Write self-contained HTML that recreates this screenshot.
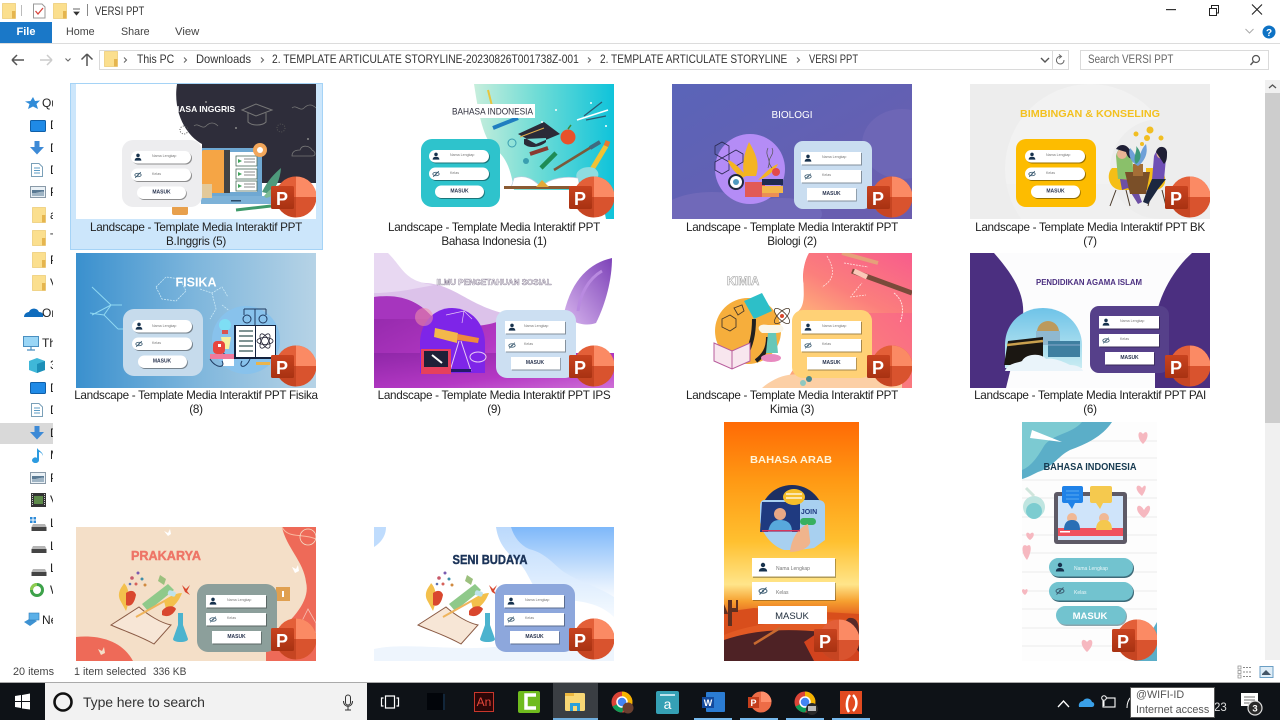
<!DOCTYPE html>
<html><head><meta charset="utf-8"><title>VERSI PPT</title>
<style>
*{box-sizing:border-box}
html,body{margin:0;padding:0;width:1280px;height:720px;overflow:hidden;background:#fff;font-family:"Liberation Sans",sans-serif;color:#2a2a2a}
.a{position:absolute;white-space:pre;transform-origin:0 50%}
.l{position:absolute;width:260px;text-align:center;font-size:11.7px;letter-spacing:-.29px;line-height:14px;color:#222;white-space:pre}
.c{position:absolute;top:53px;font-size:11.6px;color:#333;white-space:pre;transform-origin:0 50%}
.s{position:absolute;font-size:12px;color:#222;white-space:pre;line-height:14px}
svg{position:absolute;overflow:hidden}
svg text{font-family:"Liberation Sans",sans-serif}
.fl{font-size:3.6px;fill:#777}
.fb{font-size:5px;font-weight:bold;fill:#2a3550;text-anchor:middle}
.t{font-weight:bold;text-anchor:middle}
</style></head><body>

<svg width="0" height="0" style="position:absolute">
<defs>
<linearGradient id="pq" x1="0" y1="0" x2="0" y2="1"><stop offset="0" stop-color="#C9431F"/><stop offset="1" stop-color="#A83212"/></linearGradient>
<symbol id="ppt" viewBox="0 0 50 44" width="50" height="44">
<circle cx="28" cy="22" r="20.5" fill="#D9532E"/>
<path d="M28 1.500A20.500 20.500 0 0 1 48.500 22H28Z" fill="#FB8A64"/>
<path d="M28 1.500A20.500 20.500 0 0 0 7.500 22H28Z" fill="#E35F38"/>
<path d="M7.500 22A20.500 20.500 0 0 0 28 42.500V22Z" fill="#C64522"/>
<rect x="3" y="11" width="23" height="23" rx="1.500" fill="url(#pq)"/>
</symbol>
<symbol id="person" viewBox="0 0 10 10" width="10" height="10"><circle cx="5" cy="3" r="2.200" fill="#17324d"/><path d="M0.800 9.500C1 6.500 3 6 5 6S9 6.500 9.200 9.500Z" fill="#17324d"/></symbol>
<symbol id="eye" viewBox="0 0 10 10" width="10" height="10"><ellipse cx="5" cy="5" rx="4" ry="2.200" fill="none" stroke="#3a5a70" stroke-width="1"/><path d="M1.500 8.500L8.500 1.500" stroke="#3a5a70" stroke-width="1"/><circle cx="5" cy="5" r="1" fill="#3a5a70"/></symbol>
<symbol id="pills" viewBox="0 0 80 68" width="80" height="68">
<rect x="10" y="12" width="60" height="12.500" rx="6.200" fill="#000" opacity=".4"/><rect x="9" y="11" width="60" height="12.500" rx="6.200" fill="#fff"/>
<rect x="10" y="29.500" width="60" height="12.500" rx="6.200" fill="#000" opacity=".4"/><rect x="9" y="28.500" width="60" height="12.500" rx="6.200" fill="#fff"/>
<rect x="15.800" y="47.500" width="49" height="12.500" rx="6.200" fill="#000" opacity=".4"/><rect x="15" y="46.500" width="49" height="12.500" rx="6.200" fill="#fff"/>
<use href="#person" x="12" y="13" width="8" height="8"/><use href="#eye" x="12" y="31" width="8" height="8"/>
</symbol>
<symbol id="rects" viewBox="0 0 80 68" width="80" height="68">
<rect x="10" y="12" width="60" height="12.500" fill="#000" opacity=".35"/><rect x="9" y="11" width="60" height="12.500" fill="#fff"/>
<rect x="10" y="30" width="60" height="12.500" fill="#000" opacity=".35"/><rect x="9" y="29" width="60" height="12.500" fill="#fff"/>
<rect x="15.800" y="48" width="49" height="12.500" fill="#000" opacity=".35"/><rect x="15" y="47" width="49" height="12.500" fill="#fff"/>
<use href="#person" x="12" y="13" width="8" height="8"/><use href="#eye" x="12" y="31.500" width="8" height="8"/>
</symbol>
<symbol id="craft" viewBox="0 0 100 90" width="100" height="90">
<circle cx="32" cy="18" r="1.500" fill="#7a5bb0"/><circle cx="26" cy="23" r="1.800" fill="#c85a6a"/><circle cx="36" cy="24" r="1.500" fill="#3e8ea8"/><circle cx="30" cy="29" r="1.500" fill="#d6625a"/><circle cx="39" cy="30" r="1.500" fill="#d08a40"/><circle cx="24" cy="29" r="1.300" fill="#5a70b0"/>
<path d="M14 45C10 36 18 30 18 28C24 34 24 46 20 56Z" fill="#F3C04C"/>
<path d="M20 38C25 34 29 36 30 40C28 50 24 52 20 50Z" fill="#D9472E"/>
<path d="M36 49L62 29L68 35L42 56Z" fill="#8FC98A"/>
<path d="M5 70L33 52C42 60 55 68 65 70L48 89C32 80 18 76 5 70Z" fill="#F7E6D6" stroke="#8a5a44" stroke-width="1"/>
<path d="M30 62L62 44" stroke="#EFB45C" stroke-width="2"/>
<path d="M58 46C64 40 72 38 76 38C72 48 66 54 60 54Z" fill="#F3C04C"/><path d="M56 56C60 50 68 50 70 54C66 62 60 62 56 60Z" fill="#D9472E"/>
<path d="M72 58H77V70L82 84C82 88 67 88 67 84L72 70Z" fill="#4BB3CE"/>
<rect x="62" y="36" width="8" height="5" rx="2" fill="#BFE3EA" transform="rotate(20 66 38)"/>
<path d="M76 30L80 34L84 30L81 36L84 40L79 37Z" fill="#D9472E"/><path d="M54 20L60 24L58 30L52 26Z" fill="#9CC07E"/>
</symbol>
<symbol id="fold" viewBox="0 0 14 16" width="14" height="16"><rect x="0.500" y="0.500" width="13" height="15" fill="#FBDF8E" stroke="#EBC870" stroke-width=".7"/><rect x="10" y="8" width="3.500" height="7.500" fill="#E5B54E"/></symbol>
<symbol id="desk" viewBox="0 0 16 12" width="16" height="12"><rect x=".5" y=".5" width="15" height="11" rx="1" fill="#1F8AE6" stroke="#0F5FA8"/></symbol>
<symbol id="dl" viewBox="0 0 16 16" width="16" height="16"><path d="M5.500 1H10.500V7H15L8 14.500L1 7H5.500Z" fill="#3D8AD6"/></symbol>
<symbol id="doc" viewBox="0 0 12 14" width="12" height="14"><path d="M.5 .5H8L11.500 4V13.500H.5Z" fill="#fff" stroke="#7aa0b8"/><path d="M3 5H9M3 7.500H9M3 10H9" stroke="#5d9cc5"/></symbol>
<symbol id="pic" viewBox="0 0 16 12" width="16" height="12"><rect x=".5" y=".5" width="15" height="11" fill="#EAF1F6" stroke="#8a9aa8"/><path d="M2 4H14V6C10 5 6 8 2 7Z" fill="#5a7a94"/><path d="M2 7C6 8 10 5 14 6V10H2Z" fill="#9fb4c4"/></symbol>
<symbol id="drive" viewBox="0 0 16 8" width="16" height="8"><path d="M2 1H14L15.500 4H.5Z" fill="#b5b5b5"/><rect x=".5" y="4" width="15" height="4" fill="#444"/></symbol>
</defs>
</svg>

<!-- title bar -->
<svg style="left:0;top:0" width="1280" height="80" viewBox="0 0 1280 80">
<use href="#fold" x="2" y="3"/>
<rect x="21" y="5" width="1" height="11" fill="#bbb"/>
<path d="M33.500 4H42L45 7V18H33.500Z" fill="#fff" stroke="#999"/><path d="M35.500 11L38 14L43 8" stroke="#D8443C" stroke-width="1.300" fill="none"/>
<use href="#fold" x="53" y="3"/>
<path d="M73 9H80M74 12H79L76.500 15Z" fill="#333" stroke="#333" stroke-width=".8"/>
<rect x="87" y="4" width="1" height="12" fill="#888"/>
<rect x="1166" y="9" width="10" height="1.200" fill="#333"/>
<path d="M1209.500 8.500H1216.500V15.500H1209.500ZM1211.500 8V5.500H1218.500V13H1217" fill="none" stroke="#222" stroke-width="1"/>
<path d="M1252 4.500L1262 14.500M1262 4.500L1252 14.500" stroke="#222" stroke-width="1.100"/>
<rect x="0" y="43" width="1280" height="1" fill="#dcdcdc"/>
<path d="M1245.500 29L1249.500 33L1253.500 29" fill="none" stroke="#aaa" stroke-width="1"/>
<circle cx="1269" cy="32" r="6.500" fill="#0E72C4"/><text x="1269" y="36" font-size="10" font-weight="bold" text-anchor="middle" fill="#fff">?</text>
<path d="M12 60H24M12 60L17 55M12 60L17 65" fill="none" stroke="#555" stroke-width="1.500"/>
<path d="M52 60H40M52 60L47 55M52 60L47 65" fill="none" stroke="#ccc" stroke-width="1.500"/>
<path d="M65.500 58.500L68 61L70.500 58.500" fill="none" stroke="#666" stroke-width="1.100"/>
<path d="M87 66V54M87 54L81.500 59.500M87 54L92.500 59.500" fill="none" stroke="#555" stroke-width="1.500"/>
<rect x="99.500" y="50.500" width="953" height="19" fill="#fff" stroke="#dadada"/>
<rect x="1052.500" y="50.500" width="16" height="19" fill="#fff" stroke="#dadada"/>
<use href="#fold" x="104" y="51"/>
<path d="M124 57.500L126.500 60L124 62.500M184 57.500L186.500 60L184 62.500M261 57.500L263.500 60L261 62.500M588 57.500L590.500 60L588 62.500M797 57.500L799.500 60L797 62.500" fill="none" stroke="#666" stroke-width="1.100"/>
<path d="M1041 58L1045 62L1049 58" fill="none" stroke="#555" stroke-width="1.400"/>
<path d="M1064 60A3.800 3.800 0 1 1 1061 56.500M1059 54.500L1061.500 56.500L1059 58.500" fill="none" stroke="#666" stroke-width="1"/>
<rect x="1080.500" y="50.500" width="188" height="19" fill="#fff" stroke="#dadada"/>
<circle cx="1256" cy="59" r="3.500" fill="none" stroke="#555" stroke-width="1.200"/><path d="M1253.500 61.500L1250.500 65" stroke="#555" stroke-width="1.400"/>
</svg>
<div class="a" style="left:95px;top:4px;font-size:11.8px;color:#333;transform:scaleX(.8)">VERSI PPT</div>
<div class="a" style="left:0;top:22px;width:52px;height:21px;background:#1A78C8;color:#fff;font-size:11px;font-weight:bold;text-align:center;line-height:21px">File</div>
<div class="a" style="left:66px;top:26px;font-size:11.3px;color:#444;transform:scaleX(.95)">Home</div>
<div class="a" style="left:121px;top:26px;font-size:11.3px;color:#444;transform:scaleX(.95)">Share</div>
<div class="a" style="left:175px;top:26px;font-size:11.3px;color:#444">View</div>
<div class="c" style="left:137px;transform:scaleX(.9)">This PC</div>
<div class="c" style="left:196px;transform:scaleX(.96)">Downloads</div>
<div class="c" style="left:272px;transform:scaleX(.885)">2. TEMPLATE ARTICULATE STORYLINE-20230826T001738Z-001</div>
<div class="c" style="left:600px;transform:scaleX(.87)">2. TEMPLATE ARTICULATE STORYLINE</div>
<div class="c" style="left:809px;transform:scaleX(.81)">VERSI PPT</div>
<div class="a" style="left:1088px;top:53px;font-size:11.6px;color:#666;transform:scaleX(.85)">Search VERSI PPT</div>

<!-- sidebar -->
<div style="position:absolute;left:0;top:80px;width:53px;height:580px;overflow:hidden">
<div style="position:absolute;left:0;top:343px;width:53px;height:21px;background:#d9d9d9"></div>
<svg style="left:0;top:0" width="53" height="580" viewBox="0 80 53 580">
<path d="M33 97L35 101L40 100.500L36.500 104L38 109L33 106.500L28 109L29.500 104L25 101.500L30.500 101Z" fill="#2F8BD8"/>
<use href="#desk" x="30" y="120"/><use href="#dl" x="29" y="140"/><use href="#doc" x="31" y="163"/><use href="#pic" x="30" y="186"/>
<use href="#fold" x="32" y="207"/><use href="#fold" x="32" y="230"/><use href="#fold" x="32" y="252"/><use href="#fold" x="32" y="275"/>
<path d="M24 317C24 313 28 312 29 312C30 308 37 307 39 312C42 312 44 314 43 317Z" fill="#0F6CBD"/>
<rect x="23.500" y="336.500" width="15" height="10" fill="#9AD6F6" stroke="#4A8FC0"/><path d="M27 350H35M31 347V350" stroke="#4A8FC0" stroke-width="1.200"/>
<path d="M37 358L45 361V370L37 373L29 370V361Z" fill="#3FB7D8"/><path d="M37 364L45 361V370L37 373Z" fill="#1D8FB8"/>
<use href="#desk" x="30" y="382"/><use href="#doc" x="31" y="403"/><use href="#dl" x="29" y="425"/>
<path d="M39 448V460C39 464 32 464 32 460C33 457 36 457 37 458V448C39 451 43 452 43 456C42 453 40 452 39 452Z" fill="#2C9BE0"/>
<use href="#pic" x="30" y="472"/>
<rect x="31" y="493" width="15" height="14" fill="#333"/><rect x="34" y="496" width="9" height="8" fill="#5d8a4a"/><path d="M32.500 494V506M44.500 494V506" stroke="#ccc" stroke-dasharray="1 1"/>
<rect x="30" y="517" width="2.500" height="2.500" fill="#2E8BD8"/><rect x="33.500" y="517" width="2.500" height="2.500" fill="#2E8BD8"/><rect x="30" y="520.500" width="2.500" height="2.500" fill="#2E8BD8"/><rect x="33.500" y="520.500" width="2.500" height="2.500" fill="#2E8BD8"/>
<use href="#drive" x="31" y="523"/><use href="#drive" x="31" y="545"/><use href="#drive" x="31" y="568"/>
<circle cx="37" cy="590" r="7" fill="#3DA24A"/><circle cx="37" cy="590" r="4" fill="#fff"/><path d="M30 590A7 7 0 0 1 37 583V586A4 4 0 0 0 33 590Z" fill="#8ecb50"/>
<path d="M24 622L31 618L37 621L30 626Z" fill="#3E92D2"/><rect x="29" y="613" width="10" height="7" fill="#5BB0E8" stroke="#2E7CB8" stroke-width=".6"/>
</svg>
<div class="s" style="left:42px;top:16px">Quick access</div>
<div class="s" style="left:50px;top:38px">Desktop</div><div class="s" style="left:50px;top:61px">Downloads</div><div class="s" style="left:50px;top:83px">Documents</div><div class="s" style="left:50px;top:105px">Pictures</div>
<div class="s" style="left:50px;top:128px">a</div><div class="s" style="left:50px;top:151px">T</div><div class="s" style="left:50px;top:173px">P</div><div class="s" style="left:50px;top:196px">V</div>
<div class="s" style="left:42px;top:226px">OneDrive</div><div class="s" style="left:42px;top:256px">This PC</div>
<div class="s" style="left:50px;top:278px">3D Objects</div><div class="s" style="left:50px;top:301px">Desktop</div><div class="s" style="left:50px;top:323px">Documents</div><div class="s" style="left:50px;top:346px">Downloads</div><div class="s" style="left:50px;top:368px">Music</div><div class="s" style="left:50px;top:391px">Pictures</div><div class="s" style="left:50px;top:413px">Videos</div><div class="s" style="left:50px;top:436px">Local Disk</div><div class="s" style="left:50px;top:459px">Local Disk</div><div class="s" style="left:50px;top:481px">Local Disk</div><div class="s" style="left:50px;top:503px">WD</div><div class="s" style="left:42px;top:533px">Network</div>
</div>

<!-- selection -->
<div style="position:absolute;left:70px;top:83px;width:253px;height:167px;background:#CCE6FB;border:1px solid #A5D3F6"></div>

<!-- scrollbar -->
<div style="position:absolute;left:1265px;top:80px;width:15px;height:580px;background:#F0F0F0"></div>
<div style="position:absolute;left:1265px;top:93px;width:15px;height:330px;background:#CDCDCD"></div>
<svg style="left:1265px;top:80px" width="15" height="13"><path d="M4 8L7.500 5L11 8" fill="none" stroke="#555" stroke-width="1.300"/></svg>

<!-- thumbnails -->
<div style="position:absolute;left:0;top:0;width:1280px;height:720px;filter:blur(.35px)">

<!-- T1 B.Inggris -->
<svg style="left:76px;top:84px" width="240" height="135" viewBox="0 0 240 135">
<rect width="240" height="135" fill="#fff"/>
<path d="M101 0H240V99H126V60C108 50 97 26 101 0Z" fill="#2E2D3A"/>
<path d="M118 42C122 38 126 46 130 42S138 38 142 42M216 24C220 20 224 28 228 24S236 20 240 24" fill="none" stroke="#777" stroke-width=".8"/>
<path d="M166 26L180 20L196 26L180 32ZM172 29V38C176 42 186 42 190 38V29" fill="none" stroke="#777" stroke-width="1"/>
<path d="M216 72C216 66 222 66 224 66C226 60 234 62 236 66C240 68 240 72 236 72Z" fill="none" stroke="#777" stroke-width=".8"/>
<circle cx="130" cy="18" r="1" fill="#888"/><circle cx="160" cy="44" r="1" fill="#888"/><circle cx="205" cy="44" r="4" fill="none" stroke="#555" stroke-dasharray="1 1.500"/><circle cx="108" cy="46" r="4" fill="none" stroke="#555" stroke-dasharray="1 1.500"/><circle cx="232" cy="55" r="1" fill="#888"/>
<rect x="126" y="64" width="60" height="48" fill="#6FA8D2"/><rect x="131" y="68" width="50" height="40" fill="#fff"/>
<rect x="125" y="112" width="70" height="8" fill="#7DB2D8"/><rect x="155" y="116" width="10" height="1.500" fill="#2c4a66"/>
<rect x="126" y="66" width="28" height="43" rx="2" fill="#F5A545"/><rect x="148" y="66" width="6" height="43" fill="#444"/>
<rect x="118" y="100" width="18" height="14" fill="#E3C99A"/>
<rect x="160" y="72" width="21" height="10" fill="#fff" stroke="#4a6a5a" stroke-width=".8"/><rect x="160" y="85" width="21" height="10" fill="#fff" stroke="#4a6a5a" stroke-width=".8"/><rect x="160" y="97" width="21" height="10" fill="#fff" stroke="#4a6a5a" stroke-width=".8"/>
<path d="M162 75L166 77L162 79ZM162 88L166 90L162 92ZM162 100L166 102L162 104Z" fill="#41A35B"/><path d="M168 75H179M168 78H179M168 88H179M168 91H179M168 100H179M168 103H179" stroke="#666" stroke-width=".8"/>
<circle cx="184" cy="66" r="7" fill="#F2A65A"/><circle cx="184" cy="66" r="3" fill="#fff"/>
<path d="M186 108C192 96 198 90 205 84C204 96 200 104 194 110Z" fill="#4E9A7C"/><path d="M188 112C194 104 202 100 210 100C204 108 198 112 190 114Z" fill="#7DBB96"/>
<path d="M160 126L195 122" stroke="#3F9A6A" stroke-width="3"/>
<rect x="96" y="122" width="16" height="9" rx="2" fill="#E8A04C"/>
<rect x="46" y="56" width="80" height="67" rx="11" fill="#EDEDEF"/><use href="#pills" x="46" y="56"/>
<text class="fl" x="76" y="73">Nama Lengkap</text><text class="fl" x="76" y="91">Kelas</text><text class="fb" x="85.500" y="109.500">MASUK</text>
<text class="t" x="122" y="28" font-size="8.500" fill="#fff">BAHASA INGGRIS</text>
<use href="#ppt" x="192" y="91"/><text class="t" x="206" y="121" font-size="18" fill="#fff">P</text>
</svg>

<!-- T2 B.Indonesia -->
<svg style="left:374px;top:84px" width="240" height="135" viewBox="0 0 240 135">
<defs><linearGradient id="g2" x1="0" y1="0" x2="1" y2="0"><stop offset="0" stop-color="#C7EEDC"/><stop offset=".45" stop-color="#6FDCD6"/><stop offset="1" stop-color="#0FC3DA"/></linearGradient></defs>
<rect width="240" height="135" fill="#fff"/>
<path d="M100 0H240V135H232L226 106H140C138 92 134 74 122 66C108 55 104 25 100 0Z" fill="url(#g2)"/>
<path d="M114 6L120 30" stroke="#E8C53E" stroke-width="2"/>
<path d="M119 44L144 34" stroke="#1F7EC0" stroke-width="4"/>
<path d="M144 50L170 38L186 50L162 60ZM150 55V60C156 66 168 62 172 58L172 54" fill="#2B2B38"/><path d="M146 53L170 44" stroke="#E3B04C" stroke-width="1"/>
<circle cx="194" cy="53" r="7.500" fill="#E8522B"/><path d="M194 45L197 41" stroke="#3F8A3A" stroke-width="1.500"/>
<path d="M203 36L234 26" stroke="#fff" stroke-width="1.500"/><path d="M210 32L228 18M212 36L232 32" stroke="#2A5A70" stroke-width="1.300"/>
<path d="M156 70L174 64" stroke="#8A3A30" stroke-width="4"/>
<path d="M167 84L182 69" stroke="#1E8C56" stroke-width="4.500"/>
<path d="M180 86L219 62" stroke="#7A5A3A" stroke-width="2.500"/><path d="M216 64L226 58" stroke="#3F6A80" stroke-width="4"/>
<path d="M214 92L232 62" stroke="#F2C233" stroke-width="5"/><path d="M232 62L234 57" stroke="#E87A30" stroke-width="5"/>
<path d="M206 98C196 90 208 80 220 84C230 90 222 102 206 98Z" fill="#8EDCE0"/>
<circle cx="168" cy="38" r="1" fill="#fff"/><circle cx="217" cy="19" r="1" fill="#fff"/><circle cx="232" cy="42" r="1" fill="#fff"/><circle cx="182" cy="26" r="1" fill="#fff"/><circle cx="138" cy="59" r="4" fill="none" stroke="#3A9EB0"/><circle cx="152" cy="77" r="3" fill="#3A9EB0"/>
<path d="M140 94C152 90 160 96 166 102L137 104ZM168 102C176 94 192 92 204 94L206 104Z" fill="#fff" stroke="#bcd" stroke-width=".7"/>
<rect x="130" y="102" width="66" height="3" fill="#8A5A32"/><path d="M162 103L168 96L175 103Z" fill="#E4A938"/>
<rect x="47" y="55" width="79" height="68" rx="11" fill="#2EC3CC"/><use href="#pills" x="46" y="55"/>
<text class="fl" x="76" y="72">Nama Lengkap</text><text class="fl" x="76" y="90">Kelas</text><text class="fb" x="85.500" y="108.500">MASUK</text>
<rect x="76" y="20" width="85" height="14" fill="#fff"/><text x="118.500" y="30.500" font-size="8.800" text-anchor="middle" fill="#2c2c3a" textLength="81" lengthAdjust="spacingAndGlyphs">BAHASA INDONESIA</text>
<use href="#ppt" x="192" y="91"/><text class="t" x="206" y="121" font-size="18" fill="#fff">P</text>
</svg>

<!-- T3 Biologi -->
<svg style="left:672px;top:84px" width="240" height="135" viewBox="0 0 240 135">
<defs><linearGradient id="g3" x1="0" y1="0" x2="1" y2="1"><stop offset="0" stop-color="#5A64B8"/><stop offset="1" stop-color="#6B5DAE"/></linearGradient></defs>
<rect width="240" height="135" fill="url(#g3)"/>
<ellipse cx="40" cy="128" rx="50" ry="20" fill="#7069B9"/><ellipse cx="110" cy="130" rx="40" ry="16" fill="#7069B9"/><ellipse cx="230" cy="60" rx="40" ry="35" fill="#6D66B6"/>
<circle cx="78" cy="85" r="35" fill="#B48CF6"/>
<path d="M43 62L50 58L57 62V70L50 74L43 70ZM57 70L64 66L71 70V78L64 82L57 78ZM43 78L50 74L57 78V86L50 90L43 86Z" fill="none" stroke="#2A2A50" stroke-width=".8"/>
<path d="M72 92C70 80 72 70 77 58C84 70 88 80 84 92ZM70 94C62 88 56 80 56 76C62 78 68 84 74 92ZM88 94C94 88 100 82 106 80C102 88 94 94 86 96Z" fill="#F4B423"/>
<rect x="73" y="98" width="20" height="15" fill="#E25A55"/><rect x="90" y="95" width="21" height="6" fill="#1F2A50"/><rect x="90" y="102" width="21" height="7" fill="#F2B64C"/><rect x="90" y="109" width="17" height="4" fill="#EB8E55"/>
<circle cx="64" cy="98" r="7" fill="#fff" stroke="#20283E" stroke-width="2"/><circle cx="64" cy="98" r="3" fill="#4E9AC0"/>
<circle cx="104" cy="88" r="4" fill="#E2484A"/><path d="M96 64C92 72 100 74 96 84M100 64C104 72 92 74 100 84" fill="none" stroke="#555" stroke-width=".7"/>
<rect x="122" y="57" width="78" height="68" rx="9" fill="#C9DDF0"/><use href="#rects" x="120" y="57"/>
<text class="fl" x="150" y="74">Nama Lengkap</text><text class="fl" x="150" y="92">Kelas</text><text class="fb" x="159.500" y="111">MASUK</text>
<text x="120" y="34" font-size="10" text-anchor="middle" fill="#fff">BIOLOGI</text>
<use href="#ppt" x="192" y="91"/><text class="t" x="206" y="121" font-size="18" fill="#fff">P</text>
</svg>

<!-- T4 BK -->
<svg style="left:970px;top:84px" width="240" height="135" viewBox="0 0 240 135">
<rect width="240" height="135" fill="#EDEDED"/><circle cx="120" cy="85" r="85" fill="#F2F2F2"/><circle cx="190" cy="85" r="50" fill="#EDEDED"/><rect x="0" y="100" width="240" height="35" fill="#EDEDED" opacity=".5"/>
<path d="M142 84C136 90 138 104 150 106H160V84Z" fill="#F5BE16"/><path d="M188 84C198 90 198 104 186 106H176V84Z" fill="#F5BE16"/>
<path d="M146 106L140 122M156 106L160 122M182 106L178 122M192 106L196 122" stroke="#4A3A2A" stroke-width="1"/>
<path d="M146 72C148 60 160 60 162 72L164 95H148Z" fill="#8AC06A"/><circle cx="152" cy="70" r="5" fill="#E9B595"/><path d="M146 65C150 58 160 60 162 72C164 76 158 76 156 68Z" fill="#1F1F35"/>
<path d="M150 95L164 96L172 118L168 120L158 104L152 106Z" fill="#6D4FA5"/>
<path d="M184 72C188 62 196 64 196 74L194 96H182Z" fill="#6F4FB5"/><circle cx="191" cy="70" r="4.500" fill="#E9B595"/><path d="M186 68C188 60 198 62 197 70C197 76 196 78 194 80Z" fill="#1F1F35"/>
<path d="M182 95H196L188 105L178 120L173 118L178 104Z" fill="#1C2740"/>
<path d="M155 88H180L176 110H160Z" fill="#7A4F28"/><rect x="163" y="80" width="10" height="12" fill="#A56E36"/>
<path d="M168 82C160 78 158 70 160 64C164 68 166 72 168 78C170 70 172 64 176 60C178 68 176 76 168 82Z" fill="#6FA0D8"/><path d="M166 80C162 74 168 66 166 62C172 68 172 76 166 80Z" fill="#3E9A7A"/>
<circle cx="166" cy="50" r="2.500" fill="#F1BE22"/><circle cx="177" cy="54" r="3" fill="#F1BE22"/><circle cx="180" cy="46" r="3.500" fill="#F1BE22"/><circle cx="191" cy="54" r="2.500" fill="#F1BE22"/><circle cx="172" cy="60" r="2" fill="#F1BE22"/>
<rect x="46" y="55" width="80" height="68" rx="10" fill="#FDBC00"/><use href="#pills" x="46" y="55"/>
<text class="fl" x="76" y="72">Nama Lengkap</text><text class="fl" x="76" y="90">Kelas</text><text class="fb" x="85.500" y="108.500">MASUK</text>
<text class="t" x="120" y="33" font-size="10.500" fill="#F3C11F" textLength="140" lengthAdjust="spacingAndGlyphs">BIMBINGAN &amp; KONSELING</text>
<use href="#ppt" x="192" y="91"/><text class="t" x="206" y="121" font-size="18" fill="#fff">P</text>
</svg>

<!-- T5 Fisika -->
<svg style="left:76px;top:253px" width="240" height="135" viewBox="0 0 240 135">
<defs><linearGradient id="g5" x1="0" y1="0" x2="1" y2="0"><stop offset="0" stop-color="#3A90CE"/><stop offset=".5" stop-color="#7EB6DC"/><stop offset="1" stop-color="#B6D3E6"/></linearGradient></defs>
<rect width="240" height="135" fill="url(#g5)"/>
<path d="M16 34L35 52L46 52M35 52L28 62L42 76M35 52L16 62M28 62L14 60M42 76L52 76" fill="none" stroke="#8FD8F2" stroke-width="1"/>
<path d="M80 34L90 24L104 26L110 38L100 48L86 46ZM124 36L136 40L146 34L152 44M136 40L140 56L134 66M146 52L156 60L148 70" fill="none" stroke="#C9E8F6" stroke-width=".8" stroke-dasharray="2 1"/>
<circle cx="170" cy="87" r="34" fill="#88C2EC"/>
<path d="M150 92C144 96 146 100 150 102" fill="none" stroke="#2C4A80"/>
<path d="M145 84L155 84L153 96L147 96Z" fill="#F6F0A0"/><circle cx="149" cy="72" r="6" fill="#7EDEF4"/><rect x="146" y="77" width="6" height="4" fill="#D9534F"/>
<path d="M174 56H184M168 56H190M168 56V62M190 56V62M179 56V76" stroke="#1F3A60" fill="none"/><circle cx="171" cy="66" r="4" fill="none" stroke="#1F3A60"/><circle cx="187" cy="66" r="4" fill="none" stroke="#1F3A60"/>
<rect x="134" y="101" width="44" height="5" fill="#F07A9C"/>
<rect x="137" y="88" width="12" height="13" rx="4" fill="#E8463E"/><rect x="162" y="88" width="12" height="13" rx="4" fill="#E8463E"/><rect x="142" y="91" width="3" height="3" fill="#fff"/><rect x="167" y="91" width="3" height="3" fill="#fff"/>
<rect x="147" y="106" width="11" height="7" fill="#fff"/><path d="M134 106C140 116 150 115 146 108M174 106C170 116 162 115 166 108" fill="none" stroke="#1F3A60"/>
<rect x="158" y="72" width="42" height="34" fill="#13223E"/><rect x="160" y="73" width="19" height="31" fill="#fff"/><rect x="180" y="73" width="19" height="31" fill="#fff"/>
<path d="M163 78H177M163 83H177M163 88H177M163 93H177M163 98H177" stroke="#355" stroke-width="1.200"/>
<ellipse cx="189" cy="88" rx="8" ry="3.500" fill="none" stroke="#223" stroke-width=".8" transform="rotate(60 189 88)"/><ellipse cx="189" cy="88" rx="8" ry="3.500" fill="none" stroke="#223" stroke-width=".8" transform="rotate(-60 189 88)"/><ellipse cx="189" cy="88" rx="8" ry="3.500" fill="none" stroke="#223" stroke-width=".8"/>
<rect x="180" y="109" width="14" height="3" fill="#E9B44C"/>
<rect x="47" y="56" width="80" height="67" rx="11" fill="#C6DBEC"/><use href="#pills" x="47" y="56"/>
<text class="fl" x="76" y="74">Nama Lengkap</text><text class="fl" x="76" y="91">Kelas</text><text class="fb" x="86" y="109.500">MASUK</text>
<text class="t" x="120" y="33.500" font-size="12.500" fill="#fff">FISIKA</text>
<use href="#ppt" x="192" y="91"/><text class="t" x="206" y="121" font-size="18" fill="#fff">P</text>
</svg>

<!-- T6 IPS -->
<svg style="left:374px;top:253px" width="240" height="135" viewBox="0 0 240 135">
<defs><linearGradient id="g6" x1="0" y1="0" x2="1" y2="1"><stop offset="0" stop-color="#8F27A8"/><stop offset=".6" stop-color="#B438C4"/><stop offset="1" stop-color="#CE6FD6"/></linearGradient><linearGradient id="r6" x1="1" y1="0" x2="0" y2="1"><stop offset="0" stop-color="#7D42B8"/><stop offset="1" stop-color="#D8B6EE"/></linearGradient></defs>
<rect width="240" height="135" fill="#fff"/>
<path d="M0 3C14 20 24 28 52 30C80 32 92 50 128 60C145 64 155 68 180 62L160 135H0Z" fill="#DCC2EA"/>
<path d="M0 0H14C30 16 30 28 60 32C40 36 20 40 0 40Z" fill="#E8D8F2"/>
<path d="M0 44C30 42 45 48 60 66C80 76 120 76 135 62L175 135H0Z" fill="url(#g6)"/>
<path d="M0 44C30 40 46 50 60 66L0 66Z" fill="#A635BE"/>
<rect x="0" y="100" width="240" height="35" fill="url(#g6)"/>
<path d="M238 5C216 10 198 26 190 60C196 70 212 74 222 70C232 50 238 26 238 5Z" fill="url(#r6)"/>
<path d="M228 18C214 26 206 42 204 58" stroke="#B98AE0" stroke-width="3" fill="none"/>
<path d="M46 120V90C46 70 60 55 78 55C98 55 111 72 111 90V120Z" fill="#7E25E8"/>
<circle cx="50" cy="64" r="9" fill="#F08FA8" opacity=".55"/>
<path d="M61 75L84 80L83 90L60 84Z" fill="#F3B84A"/><path d="M84 81L105 85L104 90L83 87Z" fill="#F08A3C"/><path d="M85 88L76 118M87 88L97 118" stroke="#E8C9F4" stroke-width="1"/>
<path d="M72 62L90 58L98 66M90 58L88 70" stroke="#E8C9F4" stroke-width=".7" fill="none"/>
<rect x="47" y="96" width="30" height="25" fill="#E6405C"/><rect x="50" y="98" width="24" height="16" fill="#1E2038"/><path d="M58 102L68 110" stroke="#fff" stroke-width="2"/>
<ellipse cx="104" cy="104" rx="8" ry="5" fill="none" stroke="#E8C9F4"/>
<rect x="77" y="116" width="20" height="3" fill="#221a6a"/>
<rect x="122" y="57" width="80" height="68" rx="11" fill="#CCDFF2"/><use href="#rects" x="122" y="57"/>
<text class="fl" x="150" y="74">Nama Lengkap</text><text class="fl" x="150" y="92">Kelas</text><text class="fb" x="161" y="111">MASUK</text>
<text class="t" x="120" y="32" font-size="8.200" fill="#fff" stroke="#5a4a6a" stroke-width=".35" textLength="115" lengthAdjust="spacingAndGlyphs">ILMU PENGETAHUAN SOSIAL</text>
<use href="#ppt" x="192" y="91"/><text class="t" x="206" y="121" font-size="18" fill="#fff">P</text>
</svg>

<!-- T7 Kimia -->
<svg style="left:672px;top:253px" width="240" height="135" viewBox="0 0 240 135">
<defs><linearGradient id="g7" x1="1" y1="0" x2="0" y2="1"><stop offset="0" stop-color="#F85C8C"/><stop offset=".6" stop-color="#FB7F7C"/><stop offset="1" stop-color="#FFB27A"/></linearGradient></defs>
<rect width="240" height="135" fill="#fff"/>
<path d="M137 0C127 20 130 40 142 50H240V135H110C116 125 120 118 124 112L124 62C138 56 128 22 137 0Z" fill="url(#g7)"/>
<path d="M137 0H240V60H124C140 50 124 22 137 0Z" fill="url(#g7)"/>
<path d="M90 135C105 122 120 120 130 122H230V135Z" fill="#FCCFA5"/>
<path d="M180 18L240 40" stroke="#7A4A3A" stroke-width="5"/><path d="M182 18L195 24" stroke="#FBC9B9" stroke-width="5"/><path d="M170 0L206 10" stroke="#E6A07A" stroke-width="4"/>
<path d="M155 3C165 20 160 28 150 34M172 10L196 14M178 44L194 42M180 42L190 30" stroke="#FFE1DE" stroke-width=".8" fill="none" stroke-dasharray="2 1"/>
<path d="M222 40C232 48 232 58 228 70" stroke="#FFE1DE" fill="none" stroke-dasharray="2 1"/>
<circle cx="76" cy="78" r="33" fill="#F6AE3C"/>
<path d="M72 48L90 40L100 58L82 66Z" fill="#2DBFC8"/>
<path d="M82 66C82 80 80 92 72 106" stroke="#202020" stroke-width="4" fill="none"/><path d="M96 84C96 96 92 102 84 108" stroke="#202020" stroke-width="4" fill="none"/>
<path d="M96 72C86 70 84 76 90 80H104C112 80 114 74 108 72Z" fill="#FAF6E8"/>
<path d="M96 80H104L106 100H94Z" fill="#67C7B8"/><ellipse cx="99" cy="105" rx="10" ry="4" fill="#E88AC0"/>
<path d="M42 90L60 98L78 90V108L60 116L42 108Z" fill="#F8E6EE" stroke="#B85C9C"/><path d="M60 98V116" stroke="#B85C9C"/>
<path d="M50 66L58 62L64 66V74L58 78L50 74ZM62 55L70 52L72 58L66 62Z" fill="none" stroke="#4A3A2A" stroke-width=".9"/>
<ellipse cx="110" cy="63" rx="10" ry="4" fill="none" stroke="#4A3A2A" stroke-width=".8" transform="rotate(45 110 63)"/><ellipse cx="110" cy="63" rx="10" ry="4" fill="none" stroke="#4A3A2A" stroke-width=".8" transform="rotate(-45 110 63)"/><circle cx="110" cy="63" r="2" fill="#D9472E"/>
<rect x="120" y="57" width="80" height="68" rx="11" fill="#FFD176"/><use href="#rects" x="120" y="57"/>
<text class="fl" x="150" y="74">Nama Lengkap</text><text class="fl" x="150" y="92">Kelas</text><text class="fb" x="159.500" y="111">MASUK</text>
<circle cx="131" cy="130" r="3" fill="#8FC8C0"/><circle cx="137" cy="126" r="3" fill="#4A8A90"/>
<text x="71" y="32" font-size="11.500" text-anchor="middle" fill="#fff" stroke="#999" stroke-width=".5" font-weight="bold">KIMIA</text>
<use href="#ppt" x="192" y="91"/><text class="t" x="206" y="121" font-size="18" fill="#fff">P</text>
</svg>

<!-- T8 PAI -->
<svg style="left:970px;top:253px" width="240" height="135" viewBox="0 0 240 135">
<defs><linearGradient id="g8" x1="0" y1="0" x2="0" y2="1"><stop offset="0" stop-color="#6EC3E8"/><stop offset="1" stop-color="#C9ECF2"/></linearGradient></defs>
<rect width="240" height="135" fill="#FCFCFD"/>
<path d="M0 0H24C46 25 57 45 52 70L36 135H0Z" fill="#4B2F80"/>
<path d="M222 0H240V135H185V70C188 42 205 15 222 0Z" fill="#4B2F80"/>
<path d="M35 92C35 70 52 55 73 55C95 55 112 72 112 92V115H35Z" fill="url(#g8)"/>
<circle cx="78" cy="79" r="11" fill="#BC9A5C"/><rect x="66" y="78" width="24" height="14" fill="#8FB8D0"/>
<rect x="78" y="88" width="32" height="16" fill="#3E7FA0"/><path d="M78 92H110" stroke="#8AC" stroke-width="1"/>
<path d="M38 88L73 84V112H34Z" fill="#1B1712"/><path d="M37 92L73 88" stroke="#C9A04E" stroke-width="2.500"/>
<path d="M35 118C38 110 48 110 52 108C56 100 72 100 76 106C84 104 96 110 100 112C106 112 112 114 113 118Z" fill="#EAF4FA"/>
<rect x="120" y="53" width="79" height="67" rx="9" fill="#56408A"/><use href="#rects" x="120" y="52"/>
<text class="fl" x="150" y="69">Nama Lengkap</text><text class="fl" x="150" y="87">Kelas</text><text class="fb" x="159.500" y="106">MASUK</text>
<text class="t" x="119" y="32" font-size="7.800" fill="#4B2F80" textLength="106" lengthAdjust="spacingAndGlyphs">PENDIDIKAN AGAMA ISLAM</text>
<use href="#ppt" x="192" y="91"/><text class="t" x="206" y="121" font-size="18" fill="#fff">P</text>
</svg>

<!-- T9 Prakarya -->
<svg style="left:76px;top:527px" width="240" height="134" viewBox="0 0 240 134">
<rect width="240" height="134" fill="#F4DFC8"/>
<path d="M206 0H240V134H190V115C215 95 235 75 230 55C228 35 210 20 206 0Z" fill="#EE6A58"/>
<path d="M0 110C20 108 45 112 57 134H0Z" fill="#EE6A58"/>
<path d="M206 0C212 12 226 6 240 12" fill="none" stroke="#F9B9A0" stroke-width="1"/><circle cx="232" cy="10" r="8" fill="none" stroke="#F4DFC8" stroke-width=".8"/>
<rect x="200" y="60" width="14" height="14" fill="#E0A050"/><path d="M207 64V70" stroke="#fff" stroke-width="2"/>
<path d="M232 82L240 96V108L226 94Z" fill="none" stroke="#F6C1B4" stroke-width=".8"/>
<path d="M88 4L92 6L94 2L95 7L92 9Z" fill="#fff"/><path d="M216 40L220 42L222 38L223 44L219 46Z" fill="#fff"/><path d="M22 122L26 124L28 120L29 126L25 128Z" fill="#F4DFC8"/>
<use href="#craft" x="30" y="28"/>
<rect x="121" y="57" width="80" height="68" rx="11" fill="#8C9F9B"/><use href="#rects" x="121" y="57"/>
<text class="fl" x="151" y="74">Nama Lengkap</text><text class="fl" x="151" y="92">Kelas</text><text class="fb" x="160.500" y="111">MASUK</text>
<text class="t" x="90" y="33" font-size="13" fill="#EE7567" stroke="#EE7567" stroke-width=".4" textLength="70" lengthAdjust="spacingAndGlyphs">PRAKARYA</text>
<use href="#ppt" x="192" y="90"/><text class="t" x="206" y="120" font-size="18" fill="#fff">P</text>
</svg>

<!-- T10 Seni Budaya -->
<svg style="left:374px;top:527px" width="240" height="134" viewBox="0 0 240 134">
<defs><linearGradient id="g10" x1="0" y1="0" x2="0" y2="1"><stop offset="0" stop-color="#7EB8FA"/><stop offset=".7" stop-color="#D4E7FD"/><stop offset="1" stop-color="#F6FAFF"/></linearGradient><linearGradient id="g11" x1="0" y1="0" x2="0" y2="1"><stop offset="0" stop-color="#BBD9FC"/><stop offset="1" stop-color="#F5FAFF"/></linearGradient></defs>
<rect width="240" height="134" fill="#fff"/>
<path d="M122 0H240V90C220 70 190 75 170 70C155 60 155 40 138 30C130 22 124 14 122 0Z" fill="url(#g11)"/>
<path d="M137 0H240V70C225 60 205 55 190 45C180 38 172 26 155 22C146 18 140 10 137 0Z" fill="url(#g10)"/>
<path d="M0 0H12C12 10 6 16 0 20Z" fill="#BFDCFD"/>
<path d="M0 122C30 115 80 124 120 120C160 116 210 125 240 118V134H0Z" fill="#EEF5FD"/>
<use href="#craft" x="39" y="28"/>
<rect x="121" y="57" width="80" height="68" rx="11" fill="#8DA7DC"/><use href="#rects" x="121" y="57"/>
<text class="fl" x="151" y="74">Nama Lengkap</text><text class="fl" x="151" y="92">Kelas</text><text class="fb" x="160.500" y="111">MASUK</text>
<text class="t" x="116" y="37" font-size="12.500" fill="#1B3358" stroke="#1B3358" stroke-width=".4" textLength="75" lengthAdjust="spacingAndGlyphs">SENI BUDAYA</text>
<use href="#ppt" x="192" y="90"/><text class="t" x="206" y="120" font-size="18" fill="#fff">P</text>
</svg>

<!-- T11 Arab portrait -->
<svg style="left:724px;top:422px" width="135" height="239" viewBox="0 0 135 239">
<defs><linearGradient id="g12" x1="0" y1="0" x2="0" y2="1"><stop offset="0" stop-color="#FF6A05"/><stop offset=".25" stop-color="#FF9A14"/><stop offset=".5" stop-color="#FFC030"/><stop offset=".68" stop-color="#FFE58A"/><stop offset=".75" stop-color="#F6A030"/><stop offset=".82" stop-color="#E25A1E"/><stop offset="1" stop-color="#C7421C"/></linearGradient></defs>
<rect width="135" height="239" fill="url(#g12)"/>
<path d="M0 190L30 186L135 192V239H0Z" fill="#D84E1C"/>
<path d="M0 213C30 200 80 196 135 198V239H0Z" fill="#E25A24"/>
<path d="M0 218C30 208 60 206 100 210C115 212 125 218 135 222V239H0Z" fill="#4E2225"/>
<path d="M30 222L56 206" stroke="#C86A30" stroke-width="2.500"/>
<path d="M80 220L110 200L135 230V239H90Z" fill="#E1471E" opacity=".9"/>
<path d="M125 196C135 195 135 205 135 215H122C120 205 120 198 125 196Z" fill="#5A2A28"/>
<path d="M4 178H8V204H4ZM8 186H12V178H14V190H8ZM4 192H0V182" fill="#5E2F20"/>
<circle cx="68" cy="95" r="32" fill="#1D2F62"/>
<path d="M40 78H94C98 78 101 80 101 84V118L90 126C78 128 68 128 60 128C48 124 38 112 36 100V84C36 80 38 78 40 78Z" fill="#A8D0F0"/>
<path d="M38 80H76V110H36Z" fill="#1F3A80"/>
<circle cx="56" cy="92" r="6" fill="#E8A885"/><path d="M44 110C46 100 50 98 56 98C64 98 68 102 68 110Z" fill="#58A8DC"/>
<ellipse cx="70" cy="75" rx="11" ry="8" fill="#F5BE2A"/><path d="M62 72H78M62 76H78" stroke="#fff" stroke-width="1.300"/>
<text x="85" y="92" font-size="7" font-weight="bold" fill="#1F3A80" text-anchor="middle">JOIN</text>
<rect x="76" y="96" width="16" height="7" rx="3.500" fill="#38B060"/>
<path d="M66 130C68 112 78 104 84 102L86 118C88 124 78 130 66 130Z" fill="#F0B48C"/>
<rect x="38" y="108" width="38" height="1.500" fill="#D8365C"/>
<rect x="29" y="137" width="83" height="19" fill="#000" opacity=".3"/><rect x="28" y="136" width="83" height="18.500" fill="#fff"/>
<rect x="29" y="161" width="83" height="18" fill="#000" opacity=".3"/><rect x="28" y="160" width="83" height="18" fill="#fff"/>
<rect x="34" y="184" width="69" height="18" fill="#fff"/>
<use href="#person" x="34" y="140"/><use href="#eye" x="34" y="164"/>
<text x="52" y="148" font-size="5" fill="#777">Nama Lengkap</text><text x="52" y="172" font-size="5" fill="#777">Kelas</text>
<text x="68" y="197" font-size="9.500" text-anchor="middle" fill="#1d2b3a">MASUK</text>
<text class="t" x="67" y="41" font-size="10.500" fill="#FFF4D8" textLength="82" lengthAdjust="spacingAndGlyphs">BAHASA ARAB</text>
<use href="#ppt" x="87" y="196"/><text class="t" x="101" y="226" font-size="18" fill="#fff">P</text>
</svg>

<!-- T12 Indonesia portrait -->
<svg style="left:1022px;top:422px" width="135" height="239" viewBox="0 0 135 239">
<rect width="135" height="239" fill="#FDFDFD"/>
<path d="M0 19H135M0 36H135M0 58H135M0 76H135M0 95H135M0 113H135M0 131H135M0 150H135M0 169H135M0 187H135M0 206H135M0 224H135" stroke="#ECECEC" stroke-width="1"/>
<path d="M0 0H90C80 15 64 22 48 28C36 34 30 46 16 50C8 54 4 56 0 57Z" fill="#5BAEC8"/>
<path d="M0 0H60C50 12 30 12 22 24C16 34 10 44 0 48Z" fill="#7CCAD2"/>
<path d="M10 8L40 20L8 16Z" fill="#fff"/>
<circle cx="12" cy="85" r="11" fill="#BFE5E0"/><circle cx="12" cy="89" r="8" fill="#7CCCD0"/><path d="M4 66L12 74" stroke="#D0E5DC" stroke-width="3"/>
<rect x="32" y="70" width="73" height="52" rx="3" fill="#5E5A66"/><rect x="36" y="74" width="65" height="44" fill="#CFE4FA"/><rect x="36" y="106" width="65" height="8" fill="#F0515E"/><rect x="38" y="109" width="10" height="1.500" fill="#fff"/>
<rect x="40" y="64" width="21" height="17" rx="2" fill="#1F82E8"/><path d="M46 81L50 87L53 81Z" fill="#1F82E8"/><path d="M44 69H57M44 73H57M44 77H57" stroke="#6FB6F2" stroke-width=".8"/>
<rect x="68" y="64" width="22" height="17" rx="2" fill="#F5C94E"/><path d="M74 81L78 87L81 81Z" fill="#F5C94E"/>
<circle cx="50" cy="96" r="5" fill="#F0B895"/><path d="M42 108C42 100 46 98 50 98C56 98 58 102 58 108Z" fill="#2A6FB5"/>
<circle cx="82" cy="96" r="5" fill="#F0B895"/><path d="M74 108C74 100 78 98 82 98C88 98 90 102 90 108Z" fill="#F5C84E"/>
<path d="M121 12C116 6 114 16 121 22C128 16 126 6 121 12Z" fill="#F6B8C0"/>
<path d="M120 66C116 60 110 66 120 74C126 66 124 60 120 66ZM122 88C116 78 110 88 122 96C132 88 128 78 122 88Z" fill="#F6B8C0"/>
<path d="M8 112C4 108 2 114 8 118C14 114 12 108 8 112ZM5 124C0 120 -2 130 5 138C10 130 10 120 5 124ZM3 168C0 165 -2 170 3 173C7 170 6 165 3 168ZM65 220C60 214 56 222 65 230C74 222 70 214 65 220Z" fill="#F6B8C0"/>
<rect x="28" y="137" width="84" height="19" rx="9.500" fill="#3d6a78"/><rect x="27" y="136" width="84" height="18.500" rx="9.200" fill="#72C3CF"/>
<rect x="28" y="161" width="84" height="19" rx="9.500" fill="#3d6a78"/><rect x="27" y="160" width="84" height="18.500" rx="9.200" fill="#72C3CF"/>
<rect x="35" y="185" width="70" height="19" rx="9.500" fill="#3d6a78" opacity=".6"/><rect x="34" y="184" width="70" height="18.500" rx="9.200" fill="#72C3CF"/>
<use href="#person" x="33" y="140"/><use href="#eye" x="33" y="164"/>
<text x="52" y="148" font-size="5" fill="#eaf6f8">Nama Lengkap</text><text x="52" y="172" font-size="5" fill="#eaf6f8">Kelas</text>
<text x="68" y="197" font-size="9.500" font-weight="bold" text-anchor="middle" fill="#fff">MASUK</text>
<path d="M112 239L135 200V239Z" fill="#5BAEC8"/>
<text class="t" x="68" y="48" font-size="10" fill="#163A50" textLength="93" lengthAdjust="spacingAndGlyphs">BAHASA INDONESIA</text>
<use href="#ppt" x="87" y="196"/><text class="t" x="101" y="226" font-size="18" fill="#fff">P</text>
</svg>
</div>

<!-- labels -->
<div class="l" style="left:66px;top:220.500px">Landscape - Template Media Interaktif PPT
B.Inggris (5)</div>
<div class="l" style="left:364px;top:220.500px">Landscape - Template Media Interaktif PPT
Bahasa Indonesia (1)</div>
<div class="l" style="left:662px;top:220.500px">Landscape - Template Media Interaktif PPT
Biologi (2)</div>
<div class="l" style="left:960px;top:220.500px">Landscape - Template Media Interaktif PPT BK
(7)</div>
<div class="l" style="left:66px;top:389px">Landscape - Template Media Interaktif PPT Fisika
(8)</div>
<div class="l" style="left:364px;top:389px">Landscape - Template Media Interaktif PPT IPS
(9)</div>
<div class="l" style="left:662px;top:389px">Landscape - Template Media Interaktif PPT
Kimia (3)</div>
<div class="l" style="left:960px;top:389px">Landscape - Template Media Interaktif PPT PAI
(6)</div>

<!-- status bar -->
<div class="a" style="left:13px;top:666px;font-size:11.3px;color:#444;transform:scaleX(.96)">20 items</div>
<div class="a" style="left:74px;top:666px;font-size:11.3px;color:#444;transform:scaleX(.95)">1 item selected</div>
<div class="a" style="left:153px;top:666px;font-size:11.3px;color:#444;transform:scaleX(.9)">336 KB</div>
<svg style="left:1236px;top:664px" width="40" height="16" viewBox="0 0 40 16">
<rect x="2" y="2" width="3" height="3" fill="none" stroke="#888" stroke-width=".7"/><rect x="2" y="6.500" width="3" height="3" fill="none" stroke="#888" stroke-width=".7"/><rect x="2" y="11" width="3" height="3" fill="none" stroke="#888" stroke-width=".7"/><path d="M7 3.500H15M7 8H15M7 12.500H15" stroke="#888" stroke-dasharray="2 1"/>
<rect x="24" y="2.500" width="13" height="11" fill="#DFEDF7" stroke="#6A9EC4"/><path d="M26 10L30 6L35 11H26Z" fill="#456"/>
</svg>

<!-- taskbar -->
<div style="position:absolute;left:0;top:682px;width:1280px;height:1px;background:#aaa"></div>
<div style="position:absolute;left:0;top:683px;width:1280px;height:37px;background:#0E1217"></div>
<div style="position:absolute;left:45px;top:683px;width:322px;height:37px;background:#F2F2F2"></div>
<div style="position:absolute;left:553px;top:683px;width:45px;height:37px;background:#3A3E43"></div>
<div class="a" style="left:83px;top:694px;font-size:14px;color:#333;letter-spacing:-.1px">Type here to search</div>
<svg style="left:0;top:683px" width="1280" height="37" viewBox="0 683 1280 37">
<path d="M15 696L21 695V701H15ZM22 695L30 693.500V701H22ZM15 702H21V708L15 707ZM22 702H30V709.500L22 708.500Z" fill="#fff"/>
<circle cx="63" cy="702" r="8.500" fill="none" stroke="#111" stroke-width="2.600"/>
<rect x="345.500" y="695" width="5" height="10" rx="2.500" fill="none" stroke="#333"/><path d="M343.500 701C343.500 708 352.500 708 352.500 701M348 706V710M345 710H351" fill="none" stroke="#333"/>
<path d="M385.500 696V708H394.500V696ZM383.500 698H381.500V706H383.500M396.500 698H398.500V706H396.500" fill="none" stroke="#fff" stroke-width="1.200"/>
<rect x="427" y="693" width="16" height="17" fill="#02050A"/><rect x="443" y="694" width="2" height="16" fill="#12263a"/>
<rect x="474.500" y="692.500" width="19" height="19" fill="#2D0607" stroke="#C9372C"/><text x="484" y="706" font-size="12" text-anchor="middle" fill="#E8483C">An</text>
<rect x="518" y="691" width="22" height="22" rx="2" fill="#6FBB1E"/><path d="M536 695H526V708H536" fill="none" stroke="#fff" stroke-width="3.500"/>
<rect x="565" y="693" width="20" height="18" rx="1.500" fill="#F8D775"/><rect x="565" y="693" width="9" height="3" fill="#EDB83F"/><path d="M570 711V703H580V711Z" fill="#2AA0DA"/><rect x="573" y="706" width="4" height="5" fill="#F8D775"/>
<circle cx="622" cy="702" r="10.500" fill="#DB4437"/><path d="M622 702L612.500 706.500A10.500 10.500 0 0 0 622 712.500L628 702Z" fill="#0F9D58"/><path d="M622 691.500A10.500 10.500 0 0 1 632 705L622 702Z" fill="#F4B400"/><circle cx="622" cy="702" r="5" fill="#4285F4" stroke="#fff" stroke-width="1.500"/><circle cx="628" cy="708" r="5.500" fill="#6a4030"/>
<rect x="656" y="691" width="23" height="23" rx="2" fill="#35A0B5"/><rect x="660" y="694" width="15" height="2" fill="#BFE3EE"/><text x="667.500" y="709" font-size="14" text-anchor="middle" fill="#fff">a</text>
<rect x="706" y="692" width="19" height="20" rx="1" fill="#2B7CD3"/><rect x="702" y="697" width="12" height="11" fill="#144A9C"/><text x="708" y="706" font-size="9" font-weight="bold" text-anchor="middle" fill="#fff">W</text>
<circle cx="761" cy="702" r="10.500" fill="#ED6C47"/><path d="M761 691.500A10.500 10.500 0 0 1 771.500 702H761Z" fill="#FF8F6B"/><rect x="748" y="697" width="11" height="11" fill="#C43E1C"/><text x="753.500" y="706" font-size="9" font-weight="bold" text-anchor="middle" fill="#fff">P</text>
<circle cx="805" cy="702" r="10.500" fill="#DB4437"/><path d="M805 702L795.500 706.500A10.500 10.500 0 0 0 805 712.500L811 702Z" fill="#0F9D58"/><path d="M805 691.500A10.500 10.500 0 0 1 815 705L805 702Z" fill="#F4B400"/><circle cx="805" cy="702" r="5" fill="#4285F4" stroke="#fff" stroke-width="1.500"/><circle cx="812" cy="709" r="6" fill="#2a2a2a"/><rect x="808" y="706" width="8" height="5" fill="#bbb"/>
<rect x="840" y="691" width="22" height="23" fill="#E14A20"/><path d="M850 695C846 700 846 708 849 712M853 695C858 700 857 707 853 711" fill="none" stroke="#fff" stroke-width="2.500"/>
<g fill="#76B9ED"><rect x="694" y="718" width="38" height="2"/><rect x="740" y="718" width="38" height="2"/><rect x="786" y="718" width="38" height="2"/><rect x="832" y="718" width="38" height="2"/><rect x="553" y="718" width="45" height="2" opacity=".9"/></g>
<path d="M1058 707L1063.500 701L1069 707" fill="none" stroke="#fff" stroke-width="1.300"/>
<path d="M1079 707C1078 703 1081 701 1083 701C1085 697 1091 698 1092 702C1095 702 1095 707 1092 707Z" fill="#3AA0E8"/>
<rect x="1103" y="698" width="12" height="9" fill="none" stroke="#fff" stroke-width="1.100"/><circle cx="1104" cy="698" r="2.300" fill="#0E1217" stroke="#fff" stroke-width="1"/><path d="M1104 701V706" stroke="#fff"/>
<path d="M1127 708C1127 704 1128 700 1131 697" stroke="#fff" fill="none"/>
<path d="M1241 693H1258V706H1253L1250 710V706H1241Z" fill="#fff"/><path d="M1244 697H1255M1244 700H1255M1244 703H1251" stroke="#444" stroke-width=".8"/>
<circle cx="1255" cy="708" r="7" fill="#2a2a2a" stroke="#ddd" stroke-width="1.200"/><text x="1255" y="711.500" font-size="9.500" font-weight="bold" text-anchor="middle" fill="#fff">3</text>
</svg>
<div class="a" style="left:1214px;top:702px;font-size:11.5px;color:#ddd">23</div>
<div style="position:absolute;left:1130px;top:687px;width:85px;height:31px;background:#fff;border:1px solid #555"></div>
<div class="a" style="left:1136px;top:688px;font-size:10.8px;line-height:15px;color:#555">@WIFI-ID
Internet access</div>

</body></html>
